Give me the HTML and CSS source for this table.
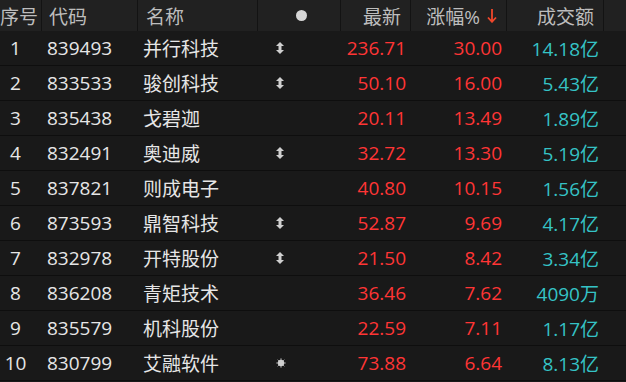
FILE: index.html
```html
<!DOCTYPE html>
<html lang="zh-CN">
<head>
<meta charset="utf-8">
<link rel="stylesheet" href="styles.css">
</head>
<body>
<div class="table">
  <div class="row head">
    <div class="c c-no">序号</div>
    <div class="c c-code">代码</div>
    <div class="c c-name">名称</div>
    <div class="c c-flag"><span class="dot"></span></div>
    <div class="c c-num">最新</div>
    <div class="c c-num">涨幅%<svg class="arrow" width="10" height="15" viewBox="0 0 10 15"><path d="M5 1 V13.5 M1 9.5 L5 13.8 L9 9.5" fill="none" stroke="#f0472b" stroke-width="1.8"/></svg></div>
    <div class="c c-num">成交额</div>
    <div class="c c-end"></div>
  </div>

  <div class="row">
    <div class="c c-no">1</div><div class="c c-code">839493</div><div class="c c-name">并行科技</div>
    <div class="c c-flag"><svg class="ud" width="8" height="12" viewBox="0 0 8 12"><polygon points="4,0 8,4 5.5,4 5.5,8 8,8 4,12 0,8 2.5,8 2.5,4 0,4"/></svg></div>
    <div class="c c-num up">236.71</div><div class="c c-num up">30.00</div><div class="c c-num amt">14.18亿</div><div class="c c-end"></div>
  </div>
  <div class="row">
    <div class="c c-no">2</div><div class="c c-code">833533</div><div class="c c-name">骏创科技</div>
    <div class="c c-flag"><svg class="ud" width="8" height="12" viewBox="0 0 8 12"><polygon points="4,0 8,4 5.5,4 5.5,8 8,8 4,12 0,8 2.5,8 2.5,4 0,4"/></svg></div>
    <div class="c c-num up">50.10</div><div class="c c-num up">16.00</div><div class="c c-num amt">5.43亿</div><div class="c c-end"></div>
  </div>
  <div class="row">
    <div class="c c-no">3</div><div class="c c-code">835438</div><div class="c c-name">戈碧迦</div>
    <div class="c c-flag"></div>
    <div class="c c-num up">20.11</div><div class="c c-num up">13.49</div><div class="c c-num amt">1.89亿</div><div class="c c-end"></div>
  </div>
  <div class="row">
    <div class="c c-no">4</div><div class="c c-code">832491</div><div class="c c-name">奥迪威</div>
    <div class="c c-flag"><svg class="ud" width="8" height="12" viewBox="0 0 8 12"><polygon points="4,0 8,4 5.5,4 5.5,8 8,8 4,12 0,8 2.5,8 2.5,4 0,4"/></svg></div>
    <div class="c c-num up">32.72</div><div class="c c-num up">13.30</div><div class="c c-num amt">5.19亿</div><div class="c c-end"></div>
  </div>
  <div class="row">
    <div class="c c-no">5</div><div class="c c-code">837821</div><div class="c c-name">则成电子</div>
    <div class="c c-flag"></div>
    <div class="c c-num up">40.80</div><div class="c c-num up">10.15</div><div class="c c-num amt">1.56亿</div><div class="c c-end"></div>
  </div>
  <div class="row">
    <div class="c c-no">6</div><div class="c c-code">873593</div><div class="c c-name">鼎智科技</div>
    <div class="c c-flag"><svg class="ud" width="8" height="12" viewBox="0 0 8 12"><polygon points="4,0 8,4 5.5,4 5.5,8 8,8 4,12 0,8 2.5,8 2.5,4 0,4"/></svg></div>
    <div class="c c-num up">52.87</div><div class="c c-num up">9.69</div><div class="c c-num amt">4.17亿</div><div class="c c-end"></div>
  </div>
  <div class="row">
    <div class="c c-no">7</div><div class="c c-code">832978</div><div class="c c-name">开特股份</div>
    <div class="c c-flag"><svg class="ud" width="8" height="12" viewBox="0 0 8 12"><polygon points="4,0 8,4 5.5,4 5.5,8 8,8 4,12 0,8 2.5,8 2.5,4 0,4"/></svg></div>
    <div class="c c-num up">21.50</div><div class="c c-num up">8.42</div><div class="c c-num amt">3.34亿</div><div class="c c-end"></div>
  </div>
  <div class="row">
    <div class="c c-no">8</div><div class="c c-code">836208</div><div class="c c-name">青矩技术</div>
    <div class="c c-flag"></div>
    <div class="c c-num up">36.46</div><div class="c c-num up">7.62</div><div class="c c-num amt">4090万</div><div class="c c-end"></div>
  </div>
  <div class="row">
    <div class="c c-no">9</div><div class="c c-code">835579</div><div class="c c-name">机科股份</div>
    <div class="c c-flag"></div>
    <div class="c c-num up">22.59</div><div class="c c-num up">7.11</div><div class="c c-num amt">1.17亿</div><div class="c c-end"></div>
  </div>
  <div class="row">
    <div class="c c-no">10</div><div class="c c-code">830799</div><div class="c c-name">艾融软件</div>
    <div class="c c-flag"><svg class="burst" width="10" height="10" viewBox="0 0 10 10"><circle cx="5" cy="5" r="3.2"/><path d="M5 0.3 V2 M5 8 V9.7 M0.3 5 H2 M8 5 H9.7 M1.7 1.7 L2.8 2.8 M7.2 7.2 L8.3 8.3 M8.3 1.7 L7.2 2.8 M1.7 8.3 L2.8 7.2" stroke="#c8c8c8" stroke-width="0.9"/></svg></div>
    <div class="c c-num up">73.88</div><div class="c c-num up">6.64</div><div class="c c-num amt">8.13亿</div><div class="c c-end"></div>
  </div>
</div>
</body>
</html>
```

FILE: styles.css
```css
html, body {
  margin: 0;
  padding: 0;
  background: #191919;
}
body {
  width: 626px;
  height: 382px;
  overflow: hidden;
  font-family: "Open Sans", "Noto Sans CJK SC", sans-serif;
  font-size: 19px;
  color: #e6e6e6;
}
.table {
  display: flex;
  flex-direction: column;
}
.row {
  display: grid;
  grid-template-columns: 42px 96px 120px 83px 70px 96px 97px 22px;
  height: 34px;
  border-bottom: 1px solid #0e0e0e;
  background: #191919;
}
.row.head {
  height: 31px;
  border-bottom: none;
  background: #212121;
  color: #bdbdbd;
}
.c {
  display: flex;
  align-items: center;
  white-space: nowrap;
  overflow: hidden;
}
.head .c {
  border-right: 1px solid #131313;
  box-sizing: border-box;
}
.head .c-end { border-right: none; }
.c-no {
  justify-content: center;
  padding-right: 11px;
}
.head .c-no {
  justify-content: flex-start;
  padding-right: 0;
  padding-left: 0;
}
.c-code, .c-name {
  padding-left: 5px;
}
.head .c-code { padding-left: 7px; }
.head .c-name { padding-left: 8px; }
.c-flag {
  padding-left: 18px;
}
.head .c-flag {
  padding-left: 38px;
}
.dot {
  width: 11px;
  height: 11px;
  border-radius: 50%;
  background: #d6d6d6;
}
.ud { fill: #cfcfcf; }
.burst { fill: #cfcfcf; }
.c-num {
  justify-content: flex-end;
  padding-right: 5px;
}
.head .c-num { padding-right: 9px; }
.arrow { margin-left: 7px; }
.up { color: #ff3535; }
.amt { color: #35c3c6; }
```
